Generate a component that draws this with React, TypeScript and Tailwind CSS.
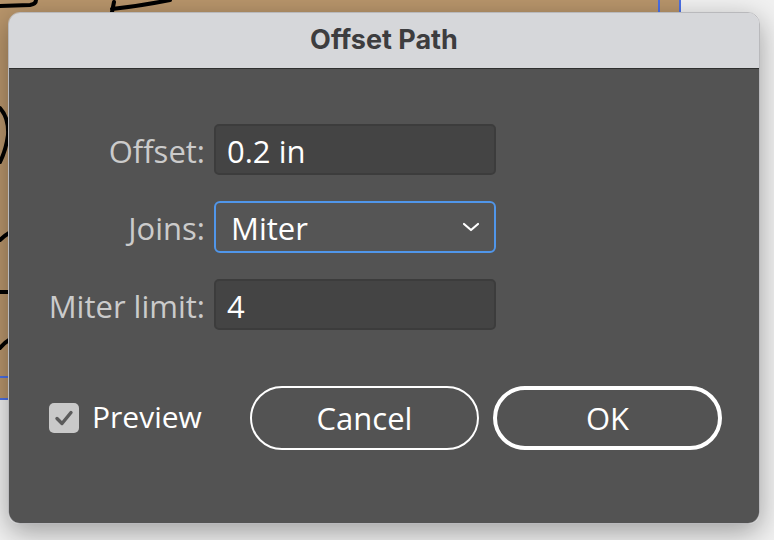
import React from "react";

const font = { fontFamily: '"Open Sans", "Liberation Sans", sans-serif' };

function Backdrop() {
  return (
    <div className="absolute left-0 top-0 w-[681px] h-[400px] bg-[#b8956b]">
      <svg width="681" height="400" className="absolute left-0 top-0">
        <g stroke="#000" strokeWidth="4" fill="none" strokeLinecap="round">
          <path d="M0 6 L30 5 Q36 4 36 0" />
          <path d="M112 12 L114 2 M112 9 Q140 6 170 0" />
          <path d="M0 108 Q9 118 8 135 Q6 150 0 162" />
          <path d="M0 240 Q4 236 9 233" />
          <path d="M0 292 L9 292" />
          <path d="M0 348 Q4 343 9 340" />
        </g>
        <line x1="659" y1="0" x2="659" y2="20" stroke="#4a6fe6" strokeWidth="2" />
        <line x1="680" y1="0" x2="680" y2="400" stroke="#4a6fe6" strokeWidth="2" />
        <line x1="0" y1="377" x2="20" y2="377" stroke="#4a6fe6" strokeWidth="2" />
        <line x1="0" y1="399" x2="681" y2="399" stroke="#4a6fe6" strokeWidth="2" />
      </svg>
    </div>
  );
}

function Field({ label, children }: { label: string; children: React.ReactNode }) {
  return (
    <>
      <div className="flex items-center justify-end h-[51px] text-[31px] font-medium text-[#cbcbcb] leading-none pt-[3px]">
        {label}
      </div>
      {children}
    </>
  );
}

export default function App() {
  return (
    <div className="relative w-[774px] h-[540px] overflow-hidden bg-[#f1f1f1]" style={font}>
      <Backdrop />
      <div className="absolute left-[8px] top-[12px] w-[752px] h-[512px] rounded-[12px] overflow-hidden flex flex-col border border-[#b9b9bc] shadow-[0_8px_28px_rgba(0,0,0,0.35)]">
        <div className="h-[56px] shrink-0 bg-[#d6d7da] border-b border-[#2f2f2f] flex items-center justify-center pb-[3px]">
          <span
            className="text-[27px] font-bold text-[#3d3d3f] leading-none"
            style={{ fontFamily: 'Inter, "Liberation Sans", sans-serif' }}
          >
            Offset Path
          </span>
        </div>
        <div className="flex-1 bg-[#535353] flex flex-col">
          <div className="grid grid-cols-[196px_282px] gap-x-[9px] gap-y-[26px] mt-[55px]">
            <Field label="Offset:">
              <div className="h-[51px] rounded-[5px] bg-[#444444] border-2 border-[#3c3c3c] flex items-center pl-[11px] text-[31px] font-medium text-white leading-none pt-[3px]">
                0.2 in
              </div>
            </Field>
            <Field label="Joins:">
              <div className="h-[52px] rounded-[6px] bg-[#555555] border-2 border-[#5096ea] flex items-center pl-[15px] pr-[14px] text-[31px] font-medium text-white leading-none">
                <span className="flex-1 pt-[3px]">Miter</span>
                <svg width="18" height="10" viewBox="0 0 18 10">
                  <path d="M2 2 L9 8 L16 2" stroke="#fff" strokeWidth="2.2" fill="none" strokeLinecap="round" strokeLinejoin="round" />
                </svg>
              </div>
            </Field>
            <Field label="Miter limit:">
              <div className="h-[51px] rounded-[5px] bg-[#444444] border-2 border-[#3c3c3c] flex items-center pl-[11px] text-[31px] font-medium text-white leading-none pt-[3px]">
                4
              </div>
            </Field>
          </div>
          <div className="flex items-center mt-[56px] pl-[40px] pr-[37px]">
            <div className="flex items-center gap-[13px]">
              <div className="w-[30px] h-[30px] rounded-[5px] bg-[#c9c9c9] flex items-center justify-center">
                <svg width="22" height="22" viewBox="0 0 22 22">
                  <path d="M4 11.5 L9 16.5 L18 5.5" stroke="#5b5b5b" strokeWidth="3.4" fill="none" strokeLinecap="round" strokeLinejoin="round" />
                </svg>
              </div>
              <span className="text-[30px] font-medium text-white leading-none mb-[3px]">Preview</span>
            </div>
            <div className="ml-auto flex gap-[14px]">
              <button className="w-[229px] h-[64px] rounded-full border-2 border-white text-white text-[31px] font-medium leading-none flex items-center justify-center">
                Cancel
              </button>
              <button className="w-[229px] h-[64px] rounded-full border-4 border-white text-white text-[31px] font-medium leading-none flex items-center justify-center">
                OK
              </button>
            </div>
          </div>
        </div>
      </div>
    </div>
  );
}
